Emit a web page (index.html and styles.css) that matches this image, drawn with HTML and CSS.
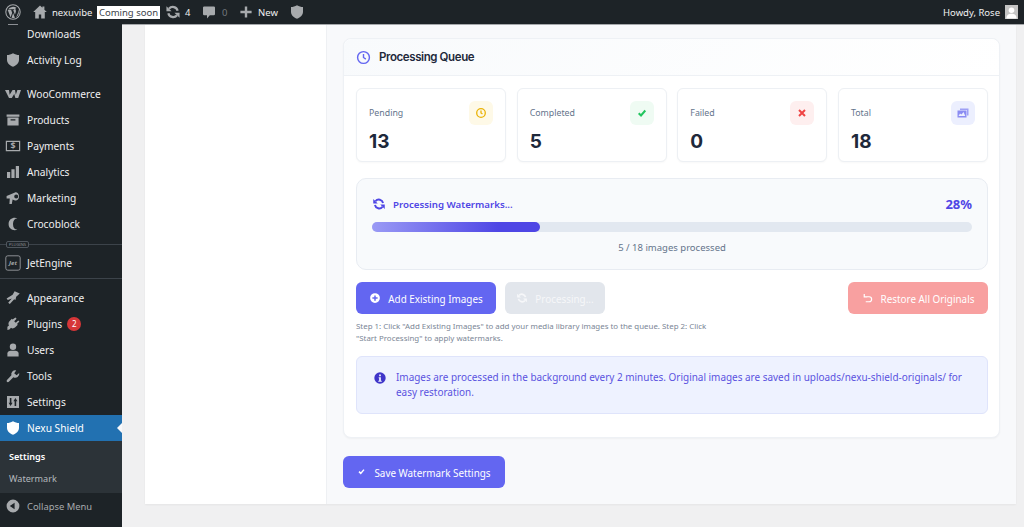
FILE: index.html
```html
<!DOCTYPE html>
<html lang="en">
<head>
    <meta charset="UTF-8">
    <title>Nexu Shield Watermark</title>
    <link rel="stylesheet" href="styles.css">
</head>
<body>
    <svg class="defs" width="0" height="0">
        <symbol id="shield" viewBox="0 0 20 20"><path d="M10 1.500C7.500 3 5 3.800 2.500 3.800v6c0 4.200 3 6.900 7.500 8.700 4.500-1.800 7.500-4.500 7.500-8.700v-6C15 3.800 12.500 3 10 1.500z"/></symbol>
        <symbol id="sync" viewBox="0 0 20 20">
            <path fill="none" stroke="currentColor" stroke-width="2.800" d="M15.800 8.500A6.200 6.200 0 0 0 5 5.900"/>
            <path fill="none" stroke="currentColor" stroke-width="2.800" d="M4.200 11.500A6.200 6.200 0 0 0 15 14.100"/>
            <path fill="currentColor" d="M1.800 2.800v6.400h6.400zM18.200 17.200v-6.400h-6.400z"/>
        </symbol>
    </svg>

    <header class="adminbar">
        <svg class="wp-logo" viewBox="0 0 20 20"><circle cx="10" cy="10" r="9" fill="none" stroke="currentColor" stroke-width="1.300"/><path d="M3.300 7.200 7 16.800l2-5.800-1.300-3.600H6.500V6.600h5v.8h-1.200l2.100 6.100 1.200-3.800c.5-1.500-.6-2.300-.6-3.300 0-.8.600-1.400 1.500-1.400A7.600 7.600 0 0 0 3.900 6.600h2v.8z M10.200 11.300l-2 5.900a7.700 7.700 0 0 0 4.200-.1zM16.800 6.700c.5 2.700-.4 4.700-2.900 9.800A7.700 7.700 0 0 0 16.800 6.700z"/></svg>
        <svg class="bar-icon home" viewBox="0 0 20 20"><path d="M10 2 1.500 10h2.500v8h4.500v-5h3v5H16v-8h2.500L15.500 7.200V3h-2.500v1.800z"/></svg>
        <span class="site-name">nexuvibe</span>
        <span class="soon">Coming soon</span>
        <svg class="bar-icon updates"><use href="#sync"/></svg>
        <span class="count">4</span>
        <svg class="bar-icon comments" viewBox="0 0 20 20"><path d="M4 3h12a1.500 1.500 0 0 1 1.500 1.500v8A1.500 1.500 0 0 1 16 14h-5l-3.500 4v-4H4a1.500 1.500 0 0 1-1.500-1.500v-8A1.500 1.500 0 0 1 4 3z"/></svg>
        <span class="count dim">0</span>
        <svg class="bar-icon plus" viewBox="0 0 20 20"><path d="M8.500 3h3v5.500H17v3h-5.500V17h-3v-5.500H3v-3h5.500z"/></svg>
        <span class="new">New</span>
        <svg class="bar-icon bar-shield"><use href="#shield"/></svg>
        <span class="howdy">Howdy, Rose</span>
        <span class="avatar"><svg viewBox="0 0 14 14"><circle cx="7" cy="5.200" r="3"/><path d="M1.500 14c0-3.500 2.500-5 5.500-5s5.500 1.500 5.500 5z"/></svg></span>
    </header>

    <div class="layout">
        <nav class="sidebar">
            <a class="item first"><span class="ico ico-cut"></span>Downloads</a>
            <a class="item"><svg class="ico"><use href="#shield"/></svg>Activity Log</a>
            <a class="item spaced"><svg class="ico" viewBox="0 0 20 20"><path d="M0 5h5l.8 6L9.500 5h3l1 6 2-6H20l-3.500 10h-3.500l-1.500-5-3 5H5z"/></svg>WooCommerce</a>
            <a class="item"><svg class="ico" viewBox="0 0 20 20"><path d="M2 3h16v3H2zM3 7h14v10H3zm4 2v1.500h6V9z" fill-rule="evenodd"/></svg>Products</a>
            <a class="item"><svg class="ico" viewBox="0 0 20 20"><path d="M1 3.500h18v13H1zM2.500 5v10h15V5z" fill-rule="evenodd"/><text x="10" y="14" text-anchor="middle" class="ico-text">$</text></svg>Payments</a>
            <a class="item"><svg class="ico" viewBox="0 0 20 20"><path d="M2.500 10h4v7.500h-4zM8 6.500h4v11H8zM13.500 2.500h4v15h-4z"/></svg>Analytics</a>
            <a class="item"><svg class="ico" viewBox="0 0 20 20"><path d="M2 7.500 12.500 3c2-.8 5 1.200 5 5s-3 5.800-5 5l-3-1.200-1 5.700H5.500l.5-7H2zM14 5.500a2.500 2.500 0 0 0 0 5 2.500 2.500 0 0 0 0-5z" fill-rule="evenodd"/></svg>Marketing</a>
            <a class="item"><svg class="ico" viewBox="0 0 20 20"><path d="M15.500 3C11 .8 4.500 3.500 4.500 10s6.500 9.200 11 7c-3.500 0-5.500-2.500-5.500-7s2-7 5.500-7z"/></svg>Crocoblock</a>
            <div class="sep plugins-sep"><span class="sep-label">PLUGINS</span></div>
            <a class="item"><svg class="ico jet" viewBox="0 0 20 20"><rect x="1" y="1" width="18" height="18" rx="2.500" fill="none" stroke="currentColor"/><text x="10" y="12.500" text-anchor="middle" class="jet-text">Jet</text></svg>JetEngine</a>
            <div class="sep plain-sep"></div>
            <a class="item"><svg class="ico" viewBox="0 0 20 20"><path d="M18.500 4.500 12 1.500 9.500 6 2 10.500l1.500 2 5-2L4 16l2 1.500 5.500-6 1.500 1 1-4z"/></svg>Appearance</a>
            <a class="item"><svg class="ico" viewBox="0 0 20 20"><path d="m13 2 1.500 1.500-3 3 2 2 3-3L18 7l-3 3 1 1-3.500 3.500c-1.500 1.200-3.500 1.300-5 .3L5.500 17 3 17.500v-4l2-1.500c-1-1.500-.9-3.500.3-5L8.500 3.500l1 1z"/></svg>Plugins<span class="badge">2</span></a>
            <a class="item"><svg class="ico" viewBox="0 0 20 20"><circle cx="10" cy="6" r="4"/><path d="M3 18v-3.500C3 12 5 11 7 11h6c2 0 4 1 4 3.500V18z"/></svg>Users</a>
            <a class="item"><svg class="ico" viewBox="0 0 20 20"><path d="M17.800 6.200 14.500 9 11.500 6.500 14 3a5 5 0 0 0-6 6.200L2.500 15c-1.500 1.500.8 3.800 2.300 2.300L10.500 11.500A5 5 0 0 0 17.800 6.200z"/></svg>Tools</a>
            <a class="item"><svg class="ico" viewBox="0 0 20 20"><path d="M2.500 2.500h15v15h-15zM6 5v6H4.500L7 15l2.500-4H8V5zm6 10h2V9h1.500L13 5l-2.500 4H12z" fill-rule="evenodd"/></svg>Settings</a>
            <a class="item active"><svg class="ico"><use href="#shield"/></svg>Nexu Shield</a>
            <div class="submenu">
                <a class="sub-item current">Settings</a>
                <a class="sub-item">Watermark</a>
            </div>
            <a class="item collapse"><svg class="ico" viewBox="0 0 20 20"><path d="M10 2a8 8 0 1 0 0 16 8 8 0 0 0 0-16zm2 4v8L6 10z" fill-rule="evenodd"/></svg>Collapse Menu</a>
        </nav>

        <main class="content">
            <div class="panel">
                <div class="panel-side"></div>
                <div class="panel-main">
                    <section class="card">
                        <div class="card-head">
                            <svg class="head-icon" viewBox="0 0 16 16"><circle cx="8" cy="8" r="6.300"/><path d="M8 4.200V8l2.500 1.700"/></svg>
                            <h2>Processing Queue</h2>
                        </div>
                        <div class="card-body">
                            <div class="stats">
                                <div class="stat">
                                    <div class="stat-text"><span class="stat-label">Pending</span><strong>13</strong></div>
                                    <span class="stat-icon yellow"><svg viewBox="0 0 12 12" class="line"><circle cx="6" cy="6" r="4.300"/><path d="M6 3.500V6l1.500 1"/></svg></span>
                                </div>
                                <div class="stat">
                                    <div class="stat-text"><span class="stat-label">Completed</span><strong>5</strong></div>
                                    <span class="stat-icon green"><svg viewBox="0 0 12 12" class="line thick"><path d="M2.700 6.200 5 8.500l4.300-5"/></svg></span>
                                </div>
                                <div class="stat">
                                    <div class="stat-text"><span class="stat-label">Failed</span><strong>0</strong></div>
                                    <span class="stat-icon red"><svg viewBox="0 0 12 12" class="line thick"><path d="m3 3 6 6M9 3l-6 6"/></svg></span>
                                </div>
                                <div class="stat">
                                    <div class="stat-text"><span class="stat-label">Total</span><strong>18</strong></div>
                                    <span class="stat-icon blue"><svg viewBox="0 0 12 12"><path d="M3 1.500h8.500v7H10V3H3z" opacity=".8"/><path d="M.5 3.500h9v7h-9zM6.500 5 4.500 7.500 3 6.500 1.500 9h6.800z" fill-rule="evenodd"/></svg></span>
                                </div>
                            </div>

                            <div class="progress-box">
                                <div class="progress-head">
                                    <svg class="progress-icon"><use href="#sync"/></svg>
                                    <span class="progress-title">Processing Watermarks...</span>
                                    <span class="progress-pct">28%</span>
                                </div>
                                <div class="track"><div class="fill" style="width: 28%"></div></div>
                                <p class="progress-note">5 / 18 images processed</p>
                            </div>

                            <div class="actions">
                                <button class="btn primary"><svg viewBox="0 0 16 16"><path d="M8 1.500a6.500 6.500 0 1 0 0 13 6.500 6.500 0 0 0 0-13zM7 4.500h2V7h2.500v2H9v2.500H7V9H4.500V7H7z" fill-rule="evenodd"/></svg>Add Existing Images</button>
                                <button class="btn disabled"><svg><use href="#sync"/></svg>Processing...</button>
                                <button class="btn danger"><svg viewBox="0 0 16 16" class="line-btn"><path d="M3 2.500v4h4M3.300 6.300H9.500a3.200 3.200 0 0 1 0 6.700H5"/></svg>Restore All Originals</button>
                            </div>
                            <p class="help">Step 1: Click "Add Existing Images" to add your media library images to the queue. Step 2: Click "Start Processing" to apply watermarks.</p>

                            <div class="notice">
                                <svg viewBox="0 0 16 16"><path d="M8 1.500a6.500 6.500 0 1 0 0 13 6.500 6.500 0 0 0 0-13zM7 4h2v2H7zM6.500 7H9v4h1v1.200H6V11h1V8.200h-.5z" fill-rule="evenodd"/></svg>
                                <p>Images are processed in the background every 2 minutes. Original images are saved in uploads/nexu-shield-originals/ for easy restoration.</p>
                            </div>
                        </div>
                    </section>
                    <button class="btn primary save"><svg viewBox="0 0 12 12" class="line-save"><path d="M2.700 6.200 5 8.500l4.300-5"/></svg>Save Watermark Settings</button>
                </div>
            </div>
        </main>
    </div>
</body>
</html>
```

FILE: styles.css
```css
* {
    box-sizing: border-box;
}

html, body {
    margin: 0;
    height: 527px;
    overflow: hidden;
}

body {
    display: flex;
    flex-direction: column;
    background: #f0f0f1;
    font-family: 'Noto Sans', sans-serif;
}

.defs {
    position: absolute;
}

/* Top bar */
.adminbar {
    height: 24px;
    flex: none;
    display: flex;
    align-items: center;
    padding: 0 6px 0 5px;
    background: #1d2327;
    color: #f0f0f1;
    font-size: 9.500px;
    white-space: nowrap;
}

.wp-logo {
    width: 16px;
    height: 16px;
    fill: #a7aaad;
    color: #a7aaad;
}

.bar-icon {
    width: 16px;
    height: 16px;
    flex: none;
    fill: #a7aaad;
    color: #a7aaad;
}

.home {
    margin-left: 11px;
}

.site-name {
    margin-left: 4px;
    width: 39px;
}

.soon {
    margin-left: 6px;
    width: 63px;
    height: 13px;
    line-height: 13px;
    background: #fff;
    color: #3c434a;
    text-align: center;
}

.updates {
    margin-left: 5px;
}

.count {
    margin-left: 4px;
    width: 10px;
}

.dim {
    margin-left: 5px;
    color: #72777c;
}

.comments {
    margin-left: 6px;
}

.plus {
    margin-left: 6px;
}

.new {
    margin-left: 4px;
    width: 20px;
}

.bar-shield {
    margin-left: 11px;
}

.howdy {
    margin-left: auto;
}

.avatar {
    margin-left: 5px;
    width: 13px;
    height: 14px;
    background: #c4c4c4;
    display: flex;
}

.avatar svg {
    fill: #fff;
}

/* Sidebar */
.layout {
    flex: 1;
    display: flex;
    min-height: 0;
}

.sidebar {
    width: 122px;
    flex: none;
    background: #1d2327;
    color: #f0f0f1;
    font-size: 10.200px;
    overflow: hidden;
}

.item {
    height: 26px;
    display: flex;
    align-items: center;
    padding-left: 5px;
}

.first {
    margin-top: -3px;
}

.spaced {
    margin-top: 8px;
}

.ico {
    width: 16px;
    height: 16px;
    margin-right: 6px;
    flex: none;
    fill: #a7aaad;
    color: #a7aaad;
}

/* bottom edge of the icon scrolled away under the top bar */
.ico-cut {
    height: 1px;
    align-self: flex-start;
    margin-top: 3px;
    background: linear-gradient(90deg, transparent 3px, #8c8f94 3px, #8c8f94 13px, transparent 13px);
}

.ico-text {
    font-size: 11px;
    font-weight: 700;
    font-family: 'Noto Sans', sans-serif;
}

.jet-text {
    font-size: 7.500px;
    font-weight: 700;
    font-style: italic;
    font-family: 'Noto Sans', sans-serif;
}

.sep {
    position: relative;
    border-bottom: 1px solid #3c434a;
}

.plugins-sep {
    height: 8px;
    margin-bottom: 5px;
}

.plain-sep {
    height: 3px;
    margin-bottom: 6px;
}

.sep-label {
    position: absolute;
    left: 6px;
    top: 4px;
    padding: 0 2px;
    height: 7px;
    line-height: 6px;
    border: 1px solid #50575e;
    border-radius: 2px;
    background: #1d2327;
    color: #8c8f94;
    font-size: 4px;
}

.badge {
    width: 14px;
    height: 14px;
    margin-left: 5px;
    border-radius: 50%;
    background: #d63638;
    color: #fff;
    font-size: 8px;
    line-height: 14px;
    text-align: center;
}

.active {
    position: relative;
    background: #2271b1;
    color: #fff;
}

.active .ico {
    fill: #fff;
}

.active::after {
    content: "";
    position: absolute;
    right: 0;
    top: 8px;
    border: 5px solid transparent;
    border-right-color: #f8f9fb;
    border-left: 0;
}

.submenu {
    padding: 4px 0;
    background: #2c3338;
    font-size: 9.100px;
    color: #b4b9be;
}

.sub-item {
    height: 22px;
    display: flex;
    align-items: center;
    padding-left: 9px;
}

.current {
    color: #fff;
    font-weight: 600;
}

.collapse {
    color: #a7aaad;
    font-size: 9.400px;
}

/* Main area */
.content {
    flex: 1;
    min-width: 0;
    padding: 0 8px 23px 23px;
    border-top: 1px solid #a5a8ab;
}

.panel {
    height: 479px;
    display: flex;
    background: #f8f9fb;
    box-shadow: 0 1px 2px rgba(0,0,0,0.05);
}

.panel-side {
    width: 182px;
    flex: none;
    background: #fff;
    border-right: 1px solid #eef0f3;
}

.panel-main {
    flex: 1;
    min-width: 0;
    padding: 13px 16px 0;
}

.card {
    height: 400px;
    background: #fff;
    border: 1px solid #eef1f5;
    border-radius: 8px;
    box-shadow: 0 1px 2px rgba(0,0,0,0.04);
}

.card-head {
    height: 37px;
    display: flex;
    align-items: center;
    gap: 8px;
    padding-left: 12px;
    border-bottom: 1px solid #eef1f5;
    border-radius: 8px 8px 0 0;
    background: linear-gradient(135deg, #f8fafc, #fff);
}

.head-icon {
    width: 15px;
    height: 15px;
    fill: none;
    stroke: #6366f1;
    stroke-width: 1.500;
}

h2 {
    margin: 0;
    color: #1e293b;
    font-family: 'Inter', sans-serif;
    font-size: 11.500px;
    font-weight: 600;
    letter-spacing: -0.4px;
}

.card-body {
    padding: 12px 11px 0 12px;
}

.stats {
    display: grid;
    grid-template-columns: repeat(4, 150px);
    justify-content: space-between;
}

.stat {
    height: 74px;
    display: flex;
    justify-content: space-between;
    padding: 12px;
    background: #fff;
    border: 1px solid #edf0f4;
    border-radius: 6px;
    box-shadow: 0 1px 2px rgba(0,0,0,0.03);
}

.stat-text {
    display: flex;
    flex-direction: column;
}

.stat-label {
    margin-top: 6px;
    color: #64748b;
    font-size: 8.800px;
}

.stat strong {
    margin-top: 11px;
    color: #1e293b;
    font-family: 'Inter', sans-serif;
    font-size: 19px;
    font-weight: 700;
}

.stat-icon {
    width: 24px;
    height: 24px;
    display: flex;
    align-items: center;
    justify-content: center;
    border-radius: 6px;
}

.stat-icon svg {
    width: 12px;
    height: 12px;
}

.line {
    fill: none;
    stroke: currentColor;
    stroke-width: 1.300;
}

.thick {
    stroke-width: 2;
}

.yellow {
    background: #fef9e7;
    color: #eab308;
}

.green {
    background: #effbf3;
    color: #22c55e;
}

.red {
    background: #feefef;
    color: #ef4444;
}

.blue {
    background: #eceffe;
    fill: #8b8cf2;
}

/* Progress */
.progress-box {
    height: 92px;
    margin-top: 16px;
    padding: 14px 15px 0;
    background: #f8fafc;
    border: 1px solid #e8ecf2;
    border-radius: 10px;
}

.progress-head {
    height: 22px;
    display: flex;
    align-items: center;
}

.progress-icon {
    width: 14px;
    height: 14px;
    color: #4f46e5;
}

.progress-title {
    margin-left: 7px;
    color: #4f46e5;
    font-size: 9.700px;
    font-weight: 600;
}

.progress-pct {
    margin-left: auto;
    color: #4f46e5;
    font-size: 13px;
    font-weight: 700;
}

.track {
    height: 10px;
    margin-top: 7px;
    background: #e2e8f0;
    border-radius: 5px;
}

.fill {
    height: 100%;
    background: linear-gradient(90deg, #9a9af5, #4f46e5 75%);
    border-radius: 5px;
}

.progress-note {
    margin: 9px 0 0;
    color: #64748b;
    font-size: 9.500px;
    text-align: center;
}

/* Buttons */
.actions {
    display: flex;
    gap: 9px;
    margin-top: 12px;
}

.btn {
    height: 32px;
    display: flex;
    align-items: center;
    justify-content: center;
    gap: 7px;
    padding: 1px 0 0;
    border: 1px solid transparent;
    border-radius: 6px;
    color: #fff;
    font-family: 'Noto Sans', sans-serif;
    font-size: 9.900px;
}

.btn svg {
    width: 12px;
    height: 12px;
    margin-top: -2px;
    fill: currentColor;
    color: inherit;
}

.primary {
    width: 140px;
    background: #6366f1;
}

.disabled {
    width: 100px;
    background: #e2e6ec;
    color: #f6f7f9;
}

.danger {
    width: 140px;
    margin-left: auto;
    background: #f8a0a0;
}

.btn .line-btn, .btn .line-save {
    fill: none;
    stroke: currentColor;
    stroke-width: 1.600;
}

.help {
    width: 358px;
    margin: 6px 0 0;
    color: #7b8696;
    font-size: 7.900px;
    line-height: 12px;
}

.notice {
    height: 58px;
    margin-top: 12px;
    display: flex;
    align-items: center;
    gap: 9px;
    padding: 0 16px;
    background: #eef2ff;
    border: 1px solid #dfe4fb;
    border-radius: 6px;
    color: #5a52e0;
}

.notice svg {
    width: 14px;
    height: 14px;
    flex: none;
    align-self: flex-start;
    margin-top: 14px;
    fill: #3f35c9;
}

.notice p {
    margin: 0;
    font-size: 9.950px;
    line-height: 15.500px;
}

.save {
    width: 162px;
    margin-top: 18px;
    gap: 8px;
}

.btn .line-save {
    width: 9px;
    height: 9px;
    stroke-width: 2;
}
```
